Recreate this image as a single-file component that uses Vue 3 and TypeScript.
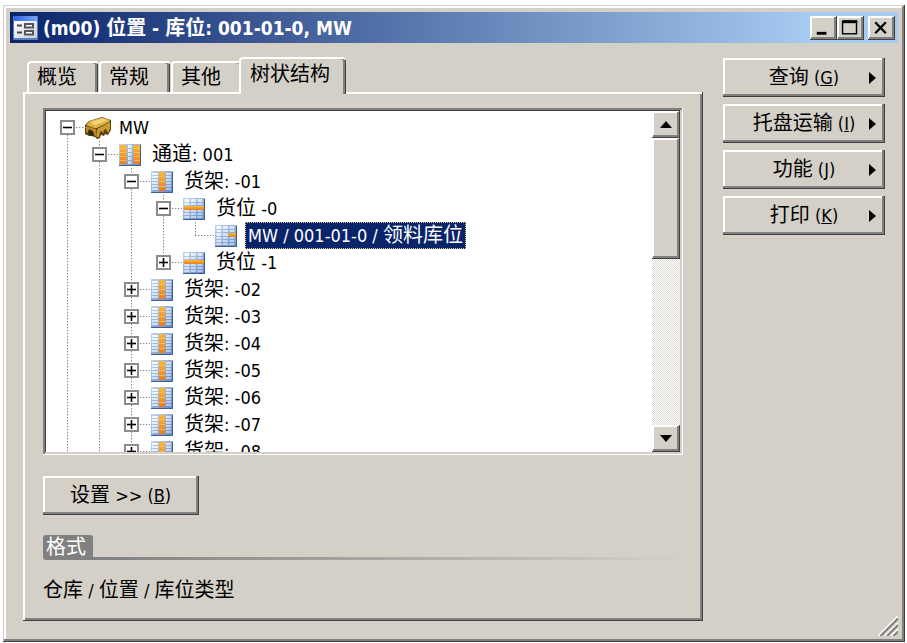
<script setup lang="ts">
import { computed, defineComponent, h, ref } from 'vue'

type Kind = 'site' | 'aisle' | 'rack' | 'bay' | 'bin'

interface TreeNode {
  id: string
  label: string
  kind: Kind
  open?: boolean
  // True when further siblings exist that are not loaded yet.
  more?: boolean
  children?: TreeNode[]
}

interface Row {
  node: TreeNode
  level: number
  guides: boolean[]
  last: boolean
}

const HAN = /([\u4e00-\u9fff]+)/

// Sets Chinese and Latin runs in their own sizes, as the system fonts do.
const MixedText = defineComponent({
  props: { text: { type: String, required: true } },
  setup(props) {
    return () =>
      h(
        'span',
        { class: 'mixed' },
        props.text
          .split(HAN)
          .filter((run) => run !== '')
          .map((run) => h('span', { class: HAN.test(run) ? 'han' : 'latin' }, run)),
      )
  },
})

const tabs = ['概览', '常规', '其他', '树状结构']
const activeTab = ref(3)

const menus = [
  { label: '查询', key: 'G' },
  { label: '托盘运输', key: 'I' },
  { label: '功能', key: 'J' },
  { label: '打印', key: 'K' },
]

const rack = (n: string): TreeNode => ({ id: 'r' + n, label: '货架: -' + n, kind: 'rack', more: true, children: [] })

const roots = ref<TreeNode[]>([
  {
    id: 'mw',
    label: 'MW',
    kind: 'site',
    open: true,
    more: true,
    children: [
      {
        id: 'a001',
        label: '通道: 001',
        kind: 'aisle',
        open: true,
        more: true,
        children: [
          {
            id: 'r01',
            label: '货架: -01',
            kind: 'rack',
            open: true,
            children: [
              {
                id: 'b0',
                label: '货位 -0',
                kind: 'bay',
                open: true,
                children: [{ id: 'bin', label: 'MW / 001-01-0 / 领料库位', kind: 'bin' }],
              },
              { id: 'b1', label: '货位 -1', kind: 'bay', children: [] },
            ],
          },
          ...['02', '03', '04', '05', '06', '07', '08'].map(rack),
        ],
      },
    ],
  },
])

const selected = ref('bin')

function flatten(nodes: TreeNode[], guides: boolean[]): Row[] {
  return nodes.flatMap((node, i) => {
    const last = i === nodes.length - 1 && !node.more
    const row: Row = { node, level: guides.length, guides, last }
    return [row, ...(node.open && node.children ? flatten(node.children, [...guides, !last]) : [])]
  })
}

const rows = computed(() => flatten(roots.value, []))
</script>

<template>
  <div class="page">
    <main class="window">
      <header class="titlebar">
        <svg class="app-icon" viewBox="0 0 25 24" aria-hidden="true">
          <defs>
            <linearGradient id="appTop" x1="0" y1="0" x2="1" y2="0">
              <stop offset="0" stop-color="#2f62e0" />
              <stop offset="1" stop-color="#7aa4f4" />
            </linearGradient>
            <linearGradient id="appBody" x1="0" y1="0" x2="1" y2="1">
              <stop offset="0" stop-color="#ffffff" />
              <stop offset="1" stop-color="#c6cede" />
            </linearGradient>
          </defs>
          <rect width="25" height="24" rx="1" fill="#5d7cb8" />
          <rect x="1" y="0" width="23" height="5" fill="url(#appTop)" />
          <rect x="1" y="5" width="23" height="17" fill="url(#appBody)" />
          <path d="M4 9.500h5M4 16.500h5" stroke="#444" stroke-width="2" />
          <rect x="12" y="8" width="8" height="3.500" fill="#fff" stroke="#555" stroke-width="2" />
          <rect x="12" y="15" width="8" height="3.500" fill="#fff" stroke="#555" stroke-width="2" />
        </svg>
        <h1><MixedText text="(m00) 位置 - 库位: 001-01-0, MW" /></h1>
        <div class="controls">
          <button type="button" class="raised" aria-label="最小化">
            <svg viewBox="0 0 28 24"><path d="M7 17.500h10" stroke="#000" stroke-width="3" /></svg>
          </button>
          <button type="button" class="raised" aria-label="最大化">
            <svg viewBox="0 0 28 24">
              <path d="M6 5.500h15" stroke="#000" stroke-width="3" />
              <rect x="5.750" y="5" width="14.500" height="13" fill="none" stroke="#000" stroke-width="1.500" />
            </svg>
          </button>
          <button type="button" class="raised close" aria-label="关闭">
            <svg viewBox="0 0 28 24"><path d="M7.500 6l11 11.500M18.500 6l-11 11.500" stroke="#000" stroke-width="2.400" /></svg>
          </button>
        </div>
      </header>

      <div class="body">
        <section class="main">
          <div class="tabs" role="tablist">
            <button
              v-for="(tab, i) in tabs"
              :key="tab"
              type="button"
              role="tab"
              class="tab"
              :class="{ active: i === activeTab }"
              :aria-selected="i === activeTab"
              @click="activeTab = i"
            >
              <MixedText :text="tab" />
            </button>
          </div>

          <div class="panel" role="tabpanel">
            <div class="list">
              <ul class="tree" role="tree">
                <li
                  v-for="row in rows"
                  :key="row.node.id"
                  class="row"
                  role="treeitem"
                  :aria-level="row.level + 1"
                  :aria-selected="row.node.id === selected"
                >
                  <span
                    v-for="(line, g) in row.guides"
                    :key="g"
                    class="guide"
                    :class="{ line }"
                  ></span>
                  <span
                    class="branch"
                    :class="{ root: row.level === 0, end: row.last }"
                  >
                    <button
                      v-if="row.node.children"
                      type="button"
                      class="expander"
                      :aria-label="row.node.open ? '折叠' : '展开'"
                      @click="row.node.open = !row.node.open"
                    >
                      <svg viewBox="0 0 11 11">
                        <path d="M1 5.500h9" stroke="#000" stroke-width="1.600" />
                        <path v-if="!row.node.open" d="M5.500 1v9" stroke="#000" stroke-width="1.600" />
                      </svg>
                    </button>
                  </span>

                  <svg v-if="row.node.kind === 'site'" class="site-icon" viewBox="0 0 28 24" aria-hidden="true">
                    <path d="M1 9L5 5L18 1L27 4L27 14L24 19L21 18L20 20L17 19L16 22L13 23L11 21L7 20L5 20L1 18Z" fill="#5a4108" />
                    <path d="M2 9L6 5L18 1.500L26 4L25 6L13 12L10 12Z" fill="#dcb348" />
                    <path d="M7 6L18 2.500L24 4L12 9L8 8Z" fill="#f0d27a" />
                    <path d="M2 10L12 13L13 21L11 20L9 15L5 13L4 17L2 16Z" fill="#b98a20" />
                    <path d="M13 13L26 6L26 13L24 17L22 13L20 14L19 18L18 15L16 16L15 21L13 21Z" fill="#c99a2c" />
                    <path d="M4.500 14l4.500 1.500v4.500l-4.500-1.500z" fill="#2b2416" />
                  </svg>
                  <svg v-else class="grid-icon" viewBox="0 0 22 22" aria-hidden="true">
                    <defs>
                      <linearGradient :id="'bg-' + row.node.id" x1="0" y1="0" x2="1" y2="1">
                        <stop offset="0" stop-color="#c3d6ee" />
                        <stop offset="1" stop-color="#6288c2" />
                      </linearGradient>
                      <linearGradient :id="'hot-' + row.node.id" x1="0" y1="0" x2="0" y2="1">
                        <stop offset="0" stop-color="#fbb836" />
                        <stop offset="1" stop-color="#ee7d1c" />
                      </linearGradient>
                      <linearGradient :id="'cell-' + row.node.id" x1="0" y1="0" x2="1" y2="1">
                        <stop offset="0" stop-color="#ffffff" />
                        <stop offset="1" stop-color="#a9c3ea" />
                      </linearGradient>
                    </defs>
                    <rect width="22" height="22" :fill="`url(#bg-${row.node.id})`" />
                    <path d="M0 21.500H21.500V1" fill="none" stroke="#3f5f93" />
                    <template v-if="row.node.kind === 'aisle'">
                      <path d="M1 1h6.500v19H1zM14.500 1H21v19h-6.500z" :fill="`url(#hot-${row.node.id})`" />
                      <path
                        d="M1 4.500h6.500M1 8.500h6.500M1 12.500h6.500M1 16.500h6.500M14.500 4.500H21M14.500 8.500H21M14.500 12.500H21M14.500 16.500H21"
                        stroke="#fbd28a"
                        stroke-width=".6"
                      />
                      <path d="M9 1h4v3H9zM9 5h4v3H9zM9 9h4v3H9zM9 13h4v3H9zM9 17h4v3H9z" :fill="`url(#cell-${row.node.id})`" />
                    </template>
                    <template v-else-if="row.node.kind === 'rack'">
                      <path
                        d="M1 2h6v2H1zM1 5h6v2H1zM1 8h6v2H1zM1 11h6v2H1zM1 14h6v2H1zM1 17h6v2H1zM15 2h5v2h-5zM15 5h5v2h-5zM15 8h5v2h-5zM15 11h5v2h-5zM15 14h5v2h-5zM15 17h5v2h-5z"
                        :fill="`url(#cell-${row.node.id})`"
                      />
                      <path d="M8 1h6v19H8z" :fill="`url(#hot-${row.node.id})`" />
                      <path d="M8 5.500h6M8 10.500h6M8 15.500h6" stroke="#fbd28a" stroke-width=".6" />
                    </template>
                    <template v-else>
                      <path
                        d="M1.500 1h5v3h-5zM8 1h5v3H8zM14.500 1h5v3h-5zM1.500 5h5v2h-5zM8 5h5v2H8zM14.500 5h5v2h-5zM1.500 8h5v3h-5zM8 8h5v3H8zM14.500 8h5v3h-5zM1.500 12h5v2h-5zM8 12h5v2H8zM14.500 12h5v2h-5zM1.500 15h5v2h-5zM8 15h5v2H8zM14.500 15h5v2h-5zM1.500 18h5v2h-5zM8 18h5v2H8zM14.500 18h5v2h-5z"
                        :fill="`url(#cell-${row.node.id})`"
                      />
                      <path v-if="row.node.kind === 'bay'" d="M1 8h20v4H1z" :fill="`url(#hot-${row.node.id})`" />
                      <path v-else d="M14 8h7v4h-7z" :fill="`url(#hot-${row.node.id})`" />
                    </template>
                  </svg>

                  <a
                    href="#"
                    class="label"
                    :class="{ selected: row.node.id === selected, near: row.node.kind === 'site' }"
                    @click.prevent="selected = row.node.id"
                  >
                    <MixedText :text="row.node.label" />
                  </a>
                </li>
              </ul>
              <div class="scrollbar">
                <button type="button" class="raised step" aria-label="向上滚动">
                  <svg viewBox="0 0 12 7"><path d="M6 0L12 7H0z" /></svg>
                </button>
                <div class="track"><div class="raised thumb"></div></div>
                <button type="button" class="raised step" aria-label="向下滚动">
                  <svg viewBox="0 0 12 7"><path d="M0 0H12L6 7z" /></svg>
                </button>
              </div>
            </div>

            <button type="button" class="push settings">
              <span><MixedText text="设置 >> (" /><u class="latin">B</u><span class="latin">)</span></span>
            </button>

            <div class="group">
              <h2><MixedText text="格式" /></h2>
              <span class="rule"></span>
            </div>
            <p class="format"><MixedText text="仓库 / 位置 / 库位类型" /></p>
          </div>
        </section>

        <nav class="menus">
          <button v-for="menu in menus" :key="menu.key" type="button" class="push menu">
            <span class="menu-text">
              <MixedText :text="menu.label + ' ('" /><u class="latin">{{ menu.key }}</u><span class="latin">)</span>
            </span>
            <svg class="arrow" viewBox="0 0 7 12" aria-hidden="true"><path d="M0 0L7 6L0 12z" /></svg>
          </button>
        </nav>
      </div>

      <svg class="grip" viewBox="0 0 20 20" aria-hidden="true">
        <path d="M0 20L20 0M7 20L20 7M13 20L20 13" stroke="#fff" stroke-width="1.500" />
        <path d="M2.500 20L20 2.500M9 20L20 9M15.500 20L20 15.500" stroke="#808080" stroke-width="2" />
      </svg>
    </main>
  </div>
</template>

<style>
body {
  margin: 0;
  background: #fff;
}
.mixed {
  white-space: pre;
}
.han {
  font-size: 20px;
}
.latin {
  font-size: 18px;
}
h1 .latin {
  font-size: 19px;
}
</style>

<style scoped>
.page {
  box-sizing: border-box;
  height: 100vh;
  min-height: 520px;
  padding: 5px 2px 1px 3px;
  font-family: 'DejaVu Sans Condensed', 'Noto Sans', 'Noto Sans CJK SC', sans-serif;
  font-size: 18px;
  line-height: 24px;
  color: #000;
}
button {
  margin: 0;
  padding: 0;
  border: 0;
  font: inherit;
  color: inherit;
  background: #d4d0c8;
}
.window {
  position: relative;
  box-sizing: border-box;
  display: flex;
  flex-direction: column;
  height: 100%;
  padding: 7px;
  background: #d4d0c8;
  box-shadow:
    inset -1px -1px #404040,
    inset 1px 1px #d4d0c8,
    inset -3px -3px #808080,
    inset 3px 3px #fff;
}
.titlebar {
  display: flex;
  align-items: center;
  flex: none;
  height: 31px;
  padding: 0 3px;
  gap: 5px;
  color: #fff;
  background: linear-gradient(to right, #0a246a, #a6caf0 90%);
}
.app-icon {
  width: 25px;
  height: 24px;
}
h1 {
  flex: 1;
  margin: 0;
  font-size: 19px;
  line-height: 24px;
  font-weight: 700;
}
.controls {
  display: flex;
  height: 24px;
}
.controls button {
  width: 27px;
}
.controls svg {
  display: block;
  width: 27px;
  height: 24px;
}
.controls .close {
  margin-left: 4px;
}
.raised {
  background: #d4d0c8;
  box-shadow:
    inset -1px -1px #404040,
    inset 1px 1px #fff,
    inset -3px -3px #808080,
    inset 2px 2px #fff;
}
.body {
  display: grid;
  grid-template-columns: 1fr 162px;
  gap: 20px;
  flex: 1;
  min-height: 0;
  padding: 15px 13px 14px 13px;
}
.main {
  display: flex;
  flex-direction: column;
  min-height: 0;
}
.tabs {
  display: flex;
  align-items: flex-end;
  flex: none;
  height: 34px;
  padding-left: 4px;
}
.tab {
  height: 31px;
  padding: 0 22px 0 8px;
  border-top: 2px solid #fff;
  border-left: 2px solid #fff;
  border-radius: 4px 4px 0 0;
  box-shadow:
    inset -1px 0 #d4d0c8,
    inset -2px 0 #404040,
    inset -4px 0 #808080;
}
.tab.active {
  z-index: 1;
  height: 37px;
  margin: 0 0 -2px -4px;
  padding: 0 16px 4px 9px;
  box-shadow:
    inset -1px 0 #404040,
    inset -3px 0 #808080;
}
.panel {
  display: flex;
  flex-direction: column;
  flex: 1;
  min-height: 0;
  box-sizing: border-box;
  padding: 16px 20px 18px;
  box-shadow:
    inset -1px -1px #404040,
    inset 2px 2px #fff,
    inset -3px -3px #808080;
}
.list {
  display: flex;
  flex: 1;
  min-height: 0;
  padding: 3px;
  background: #fff;
  box-shadow:
    inset -1px -1px #fff,
    inset 2px 2px #808080,
    inset -3px -3px #d4d0c8,
    inset 3px 3px #404040;
}
.tree {
  flex: 1;
  min-width: 0;
  margin: 0;
  padding: 3px 0 0 5px;
  overflow: hidden;
  list-style: none;
}
.row {
  display: flex;
  align-items: center;
  height: 27px;
}
.guide {
  flex: none;
  width: 32px;
  height: 27px;
}
.guide.line,
.branch::before {
  background: repeating-linear-gradient(to bottom, #808080 0 1px, #d0d0d0 1px 2px, #fff 2px 3px) 16px 0 / 1px 100% no-repeat;
}
.branch {
  position: relative;
  display: flex;
  align-items: center;
  flex: none;
  width: 36px;
  height: 27px;
}
.branch::before {
  content: '';
  position: absolute;
  inset: 0;
}
.branch.end::before {
  bottom: 13px;
}
.branch.root::before {
  top: 15px;
}
.branch::after {
  content: '';
  position: absolute;
  top: 13px;
  left: 16px;
  right: 1px;
  height: 1px;
  background: repeating-linear-gradient(to right, #808080 0 1px, #d0d0d0 1px 2px, #fff 2px 3px);
}
.expander {
  position: relative;
  z-index: 1;
  width: 15px;
  height: 15px;
  margin-left: 9px;
  border: 2px solid #8c8c8c;
  background: #fff;
}
.expander svg {
  display: block;
  width: 11px;
  height: 11px;
}
.grid-icon {
  flex: none;
  width: 22px;
  height: 22px;
}
.site-icon {
  flex: none;
  width: 28px;
  height: 24px;
  margin-left: -3px;
}
.label {
  margin-left: 8px;
  padding: 0 3px;
  color: inherit;
  line-height: 26px;
  text-decoration: none;
}
.label.near {
  margin-left: 4px;
}
.label.selected {
  color: #fff;
  background: #0a246a;
  outline: 1px dotted #e8d080;
  outline-offset: -1px;
}
.scrollbar {
  display: flex;
  flex-direction: column;
  flex: none;
  width: 28px;
}
.step {
  display: grid;
  place-items: center;
  height: 27px;
}
.step svg {
  width: 12px;
  height: 7px;
}
.track {
  flex: 1;
  background: repeating-conic-gradient(#fff 0 25%, #dedbd5 0 50%) 0 0 / 2px 2px;
}
.thumb {
  height: 42%;
}
.push {
  box-sizing: border-box;
  height: 39px;
  box-shadow:
    inset -1px -1px #404040,
    inset -3px -3px #808080,
    inset 2px 2px #fff;
}
.settings {
  align-self: flex-start;
  flex: none;
  margin: 21px 0 20px;
  padding: 0 28px 0 27px;
}
.group {
  display: flex;
  align-items: flex-end;
  flex: none;
  height: 25px;
}
h2 {
  margin: 0;
  padding: 0 7px 1px 3px;
  border-radius: 3px 3px 0 3px;
  font-size: 20px;
  line-height: 24px;
  font-weight: 400;
  color: #fff;
  background: #808080;
}
.rule {
  flex: 1;
  height: 3px;
  background: linear-gradient(to right, #808080, #d4d0c8);
}
.format {
  flex: none;
  margin: 18px 0 0;
  line-height: 24px;
}
.menus {
  display: flex;
  flex-direction: column;
  gap: 7px;
}
.menu {
  display: grid;
  align-items: center;
  padding: 0 9px;
}
.menu-text,
.arrow {
  grid-area: 1 / 1;
}
.menu-text {
  justify-self: center;
}
.arrow {
  justify-self: end;
  width: 7px;
  height: 12px;
}
.grip {
  position: absolute;
  right: 7px;
  bottom: 6px;
  width: 20px;
  height: 20px;
}
</style>
